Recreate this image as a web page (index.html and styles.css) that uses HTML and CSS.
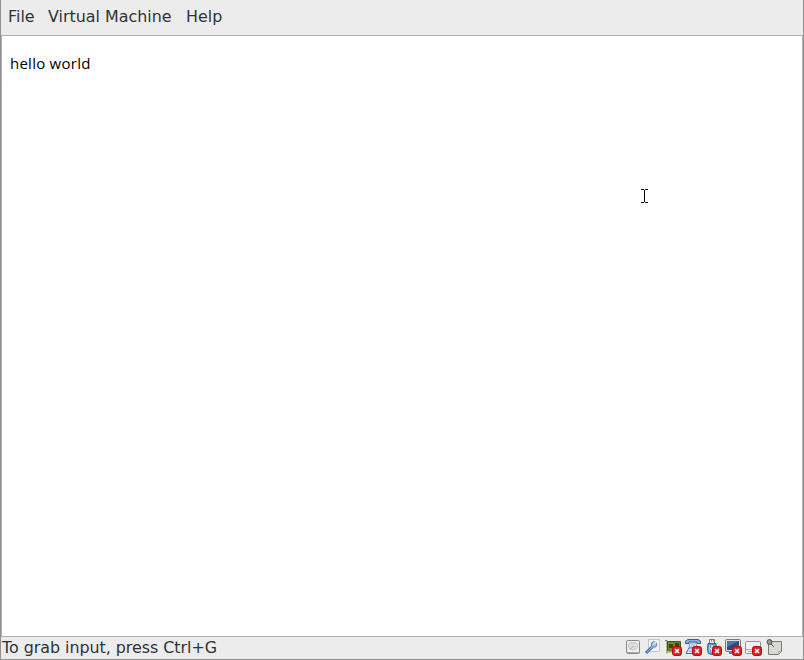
FILE: index.html
```html
<!DOCTYPE html>
<html lang="en">
<head>
<meta charset="utf-8">
<title>Virtual Machine</title>
<link rel="stylesheet" href="styles.css">
</head>
<body>
<svg class="defs" width="0" height="0" aria-hidden="true">
  <symbol id="off" viewBox="0 0 10 10">
    <rect x=".5" y=".5" width="9" height="9" rx="2.2" fill="#db1f27" stroke="#b6090f"/>
    <path d="M3 3l4 4m0-4l-4 4" stroke="#fff" stroke-width="1.7"/>
  </symbol>
</svg>
<div class="window">
  <nav class="menubar"><span class="file">File</span><span class="vm">Virtual Machine</span><span class="help">Help</span></nav>
  <main class="screen">
    <p class="output">hello world</p>
    <svg class="cursor" viewBox="0 0 7 14" shape-rendering="crispEdges"><path d="M0 0h3v1H0zM4 0h3v1H4zM3 1h1v12H3zM0 13h3v1H0zM4 13h3v1H4z"/></svg>
  </main>
  <footer class="statusbar">
    <span class="hint">To grab input, press Ctrl+G</span>
    <div class="devices">
      <svg viewBox="0 0 16 16"><rect x="1.5" y="1.5" width="13" height="13" rx="1" fill="#eee" stroke="#888a85"/><path d="M2 13.5h12" stroke="#aaa"/><ellipse cx="8" cy="7" rx="4.5" ry="3.5" fill="#e0e0e0" stroke="#c3c3c3"/><path d="M5 10l4-3" stroke="#aaa"/></svg>
      <svg viewBox="0 0 16 16"><path d="M3.5.5h11v12h-11z" fill="#f4f4f4" stroke="#c5c5c5"/><path d="M1 14l6-6" stroke="#4774ae" stroke-width="3"/><path d="M2 13l5-5" stroke="#8db5e2"/><circle cx="9" cy="5.5" r="2.8" fill="#9dbce0" stroke="#5d87bd"/><path d="M8.5 5.5l3-3" stroke="#eee" stroke-width="1.5"/></svg>
      <svg viewBox="0 0 16 16"><path d="M0 1.5h2v13" fill="none" stroke="#777"/><path d="M2.5 2.5h13v9h-13z" fill="#698b22" stroke="#3e5711"/><path d="M4 5h4v4H4zM10 4h4v3h-4z" fill="#34460f"/><path d="M3 12.5h6" stroke="#bea42c" stroke-width="2"/><use href="#off" x="7" y="7" width="10" height="10"/></svg>
      <svg viewBox="0 0 16 16"><path d="M.5 4.5V2L3 .5h10L15.5 2v2.5H12V3H4v1.5z" fill="#88b0dd" stroke="#315f9e"/><path d="M5 4h6l1 5H4z" fill="#eef3f8" stroke="#6f99c7"/><path d="M4 9h8l3 5.5H1z" fill="#dce8f5" stroke="#3f6ea8"/><path d="M6 6h4M5 8h5M4 12h3" stroke="#86a7cb"/><use href="#off" x="7" y="7" width="10" height="10"/></svg>
      <svg viewBox="0 0 16 16"><path d="M4.5.5h5v4h-5z" fill="#eee" stroke="#777"/><path d="M6 2h1M8 2h1" stroke="#444"/><path d="M3 4.5h8q1 5 0 9-1 2-4 2t-4-2q-1-4 0-9z" fill="#6e9ccf" stroke="#315f9e"/><path d="M4.5 6v7" stroke="#a9c8e8"/><path d="M7 6v7M5 9l2 2 2-2" fill="none" stroke="#fff"/><use href="#off" x="7" y="7" width="10" height="10"/></svg>
      <svg viewBox="0 0 16 16"><rect x=".5" y=".5" width="15" height="12" rx="1" fill="#ddd" stroke="#777b78"/><path d="M2 2h12v9H2z" fill="#294f82"/><path d="M2 2h12L2 8z" fill="#4877b0"/><path d="M4 14h7" stroke="#777" stroke-width="2"/><use href="#off" x="7" y="7" width="10" height="10"/></svg>
      <svg viewBox="0 0 16 16"><rect x=".5" y="2.5" width="15" height="12" rx="1" fill="#f2f2f2" stroke="#90938f"/><path d="M1 10.5h14M3 12.5h4" stroke="#aaa"/><use href="#off" x="7" y="7" width="10" height="10"/></svg>
      <svg class="note" viewBox="0 0 16 16"><path d="M2.5 2.5h13v10l-3 3h-10z" fill="#d7d9d2" stroke="#777b74"/><path d="M12.5 15v-2.5H15" fill="#f2f2ed" stroke="#aaa"/><path d="M4 4l4 4" stroke="#555"/><circle cx="3.5" cy="3" r="2.5" fill="#888b88" stroke="#555957"/><path d="M2 3h2" stroke="#bbb"/></svg>
    </div>
  </footer>
</div>
</body>
</html>
```
FILE: styles.css
```css
* { box-sizing: border-box; }
body { margin: 0; background: #ececec; }
.defs { position: absolute; }
.window { width: 804px; height: 660px; border: solid #919191; border-width: 0 1px 1px; display: flex; flex-direction: column; background: #ececec; font: 15.9px/20px "DejaVu Sans", sans-serif; color: #2e3436; }
.menubar { height: 35px; flex: none; display: flex; padding: 7px 0 0 7px; }
.menubar span { white-space: nowrap; }
.file { width: 40px; }
.vm { width: 138px; }
.screen { height: 602px; flex: none; position: relative; border: 1px solid #b0b0b0; background: #fff; padding: 17px 8px; }
.output { margin: 0; font: 15px/20px "Open Sans", sans-serif; letter-spacing: .25px; color: #000; }
.cursor { position: absolute; left: 639px; top: 153px; width: 7px; height: 14px; }
.statusbar { flex: 1; display: flex; justify-content: space-between; padding: 1px 21px 0 1px; }
.hint { white-space: nowrap; letter-spacing: -.03px; }
.devices { display: flex; gap: 4px; padding-top: 1px; }
.devices svg { width: 16px; height: 16px; display: block; overflow: visible; }
.devices .note { margin-left: 1px; }
```
